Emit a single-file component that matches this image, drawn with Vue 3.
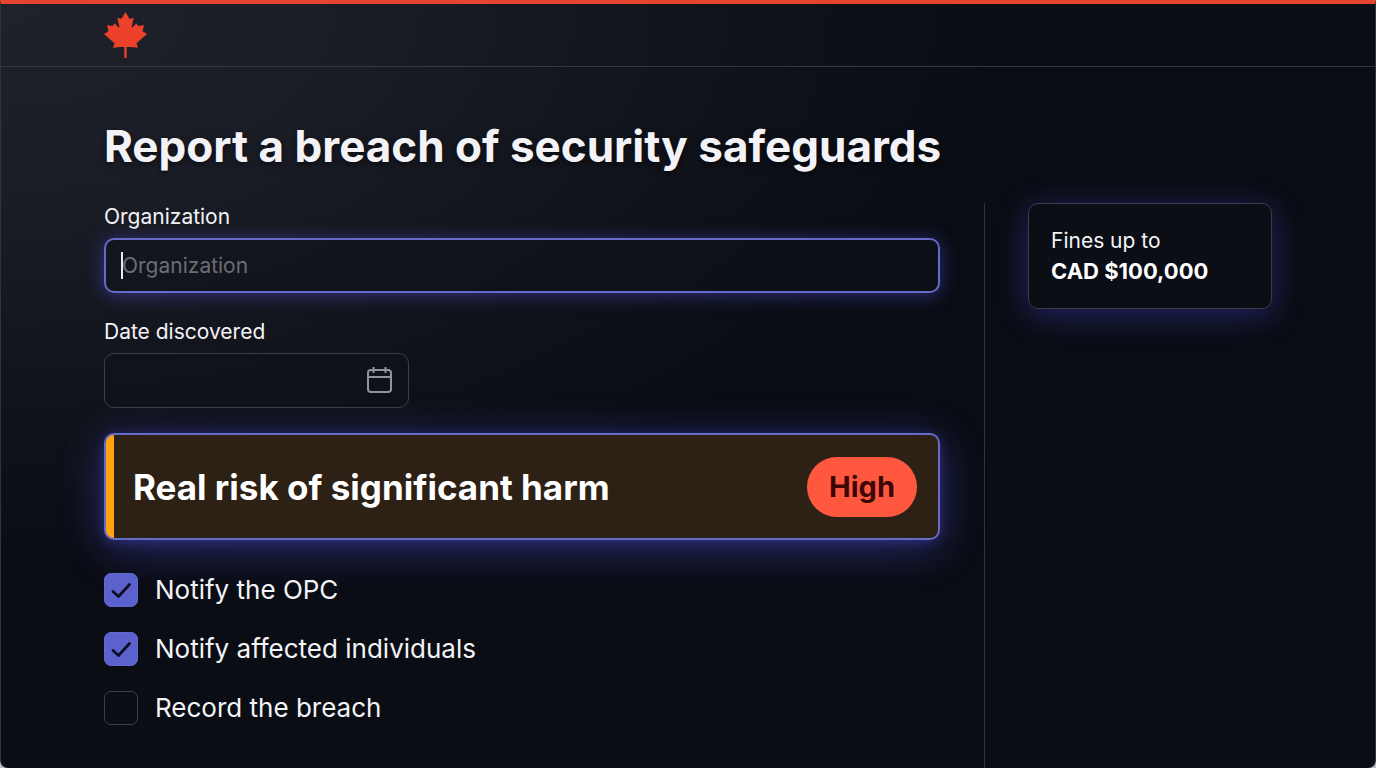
<template>
  <div class="page">
    <header class="topbar">
      <a class="brand" href="#" aria-label="Canada">
        <svg viewBox="0 0 129 138" aria-hidden="true">
          <path
            d="M64.500 0L54 18Q52 21 49 20L40 17L46 44Q46 48 43 46L32 34L28 40Q27 42 24 42L9 39L13 56Q13 59 10 60L0 66L30 92Q32 94 31 96L27 107Q45 104 61 105V138H68V105Q84 104 102 107L98 96Q97 94 99 92L129 66L119 60Q116 59 116 56L120 39L105 42Q102 42 101 40L97 34L86 46Q83 48 83 44L89 17L80 20Q77 21 75 18Z"
            fill="currentColor"
          />
        </svg>
      </a>
    </header>

    <main class="content">
      <h1>Report a breach of security safeguards</h1>

      <div class="columns">
        <form class="report" @submit.prevent>
          <div class="field">
            <label for="organization">Organization</label>
            <div class="control">
              <input
                id="organization"
                v-model="organization"
                class="input active"
                type="text"
                placeholder="Organization"
              />
              <span v-if="!organization" class="caret"></span>
            </div>
          </div>

          <div class="field">
            <label for="discovered">Date discovered</label>
            <div class="control date">
              <input id="discovered" v-model="discovered" class="input" :class="{ empty: !discovered }" type="date" />
              <svg class="calendar" viewBox="0 0 28 28" aria-hidden="true">
                <rect x="2" y="4" width="23" height="22" rx="3" />
                <path d="M2 11H25M7.500 1V7M19.500 1V7" />
              </svg>
            </div>
          </div>

          <section class="risk">
            <h2>Real risk of significant harm</h2>
            <span class="badge">High</span>
          </section>

          <div class="checks">
            <label v-for="item in actions" :key="item.id" class="check" :for="item.id">
              <span class="box">
                <input :id="item.id" v-model="item.done" type="checkbox" />
                <svg v-if="item.done" viewBox="0 0 34 34" aria-hidden="true">
                  <path d="M9 18.500L14.500 23.500L25.500 11.500" />
                </svg>
              </span>
              {{ item.label }}
            </label>
          </div>
        </form>

        <aside class="side">
          <div class="fines">
            <p>Fines up to</p>
            <strong>CAD $100,000</strong>
          </div>
        </aside>
      </div>
    </main>
  </div>
</template>

<script setup>
import { ref } from 'vue'

const organization = ref('')
const discovered = ref('')

const actions = ref([
  { id: 'notify-opc', label: 'Notify the OPC', done: true },
  { id: 'notify-individuals', label: 'Notify affected individuals', done: true },
  { id: 'record-breach', label: 'Record the breach', done: false }
])
</script>

<style>
html,
body {
  background: #b9bbc0;
}
</style>

<style scoped>
.page {
  box-sizing: border-box;
  display: flex;
  flex-direction: column;
  min-height: 100vh;
  border: 1px solid #30333b;
  border-top: 4px solid #e5442f;
  border-bottom: 0;
  border-radius: 0 0 8px 8px;
  background: radial-gradient(ellipse 1000px 560px at 0 0, #20222b 0%, #1b1d26 35%, #10121a 75%, #0a0d14 100%);
  color: #f3f3f7;
  font-family: Inter, "Liberation Sans", sans-serif;
  font-size: 21px;
}

.topbar {
  display: flex;
  align-items: center;
  height: 62px;
  padding: 0 103px;
  border-bottom: 1px solid #34373f;
}

.brand {
  display: block;
  color: #ec422b;
}

.brand svg {
  display: block;
  width: 43px;
  height: 46px;
}

.content {
  flex: 1;
  display: flex;
  flex-direction: column;
  padding: 50px 103px 0;
}

h1 {
  margin: 0 0 28px;
  font-size: 44px;
  line-height: 58px;
  font-weight: 700;
  text-shadow: 0 2px 6px rgba(0, 0, 0, 0.6);
}

.columns {
  flex: 1;
  display: grid;
  grid-template-columns: minmax(0, 1fr) 288px;
  gap: 44px;
}

.report {
  display: flex;
  flex-direction: column;
  gap: 25px;
  padding-bottom: 43px;
}

.field {
  display: flex;
  flex-direction: column;
  gap: 8px;
}

.field label {
  line-height: 27px;
}

.control {
  position: relative;
}

.date {
  width: 305px;
}

.input {
  display: block;
  box-sizing: border-box;
  width: 100%;
  height: 55px;
  padding: 0 16px;
  border: 1px solid #3c3e48;
  border-radius: 10px;
  outline: none;
  background: rgba(14, 17, 24, 0.5);
  color: inherit;
  font: inherit;
}

.input::placeholder {
  color: #6c6d75;
  opacity: 1;
}

.input.active {
  border: 2px solid #666bc9;
  box-shadow: 0 2px 18px rgba(80, 80, 220, 0.5);
  caret-color: transparent;
}

.input.empty::-webkit-datetime-edit {
  color: transparent;
}

.input::-webkit-calendar-picker-indicator {
  opacity: 0;
}

.caret {
  position: absolute;
  left: 17px;
  top: 14px;
  width: 2px;
  height: 27px;
  background: #e8e8ee;
}

.calendar {
  position: absolute;
  right: 15px;
  top: 13px;
  width: 28px;
  height: 28px;
  fill: none;
  stroke: #92939b;
  stroke-width: 2;
  pointer-events: none;
}

.risk {
  display: flex;
  align-items: center;
  justify-content: space-between;
  box-sizing: border-box;
  height: 107px;
  padding: 0 21px 0 27px;
  border: 2px solid #666bc9;
  border-radius: 10px;
  background: linear-gradient(90deg, #ffa30f 8px, #2d2115 8px);
  box-shadow: 0 8px 44px rgba(80, 80, 220, 0.45), 0 2px 12px rgba(80, 80, 220, 0.35);
}

h2 {
  margin: 0;
  color: #fff;
  font-size: 35px;
  line-height: 44px;
  font-weight: 700;
}

.badge {
  padding: 8px 22px;
  border-radius: 30px;
  background: #ff583f;
  color: #3c0806;
  font-size: 29px;
  line-height: 44px;
  font-weight: 700;
}

.checks {
  display: flex;
  flex-direction: column;
  gap: 25px;
  margin-top: 8px;
}

.check {
  display: flex;
  align-items: center;
  gap: 17px;
  font-size: 26px;
  line-height: 34px;
}

.box {
  position: relative;
  width: 34px;
  height: 34px;
}

.box input {
  appearance: none;
  display: block;
  box-sizing: border-box;
  width: 34px;
  height: 34px;
  margin: 0;
  border: 1px solid #3c3e48;
  border-radius: 7px;
}

.box input:checked {
  border-color: #6268d2;
  background: #5b61cd;
}

.box svg {
  position: absolute;
  inset: 0;
  fill: none;
  stroke: #0d0e24;
  stroke-width: 2.8;
  stroke-linecap: round;
  stroke-linejoin: round;
  pointer-events: none;
}

.side {
  padding-left: 43px;
  border-left: 1px solid #30323a;
}

.fines {
  padding: 22px;
  border: 1px solid #3b3c4c;
  border-radius: 10px;
  background: #0b0e15;
  box-shadow: 0 6px 32px rgba(70, 70, 210, 0.42);
  line-height: 30px;
}

.fines p {
  margin: 0;
}

.fines strong {
  display: block;
  color: #fff;
  font-size: 22px;
  font-weight: 700;
}
</style>
